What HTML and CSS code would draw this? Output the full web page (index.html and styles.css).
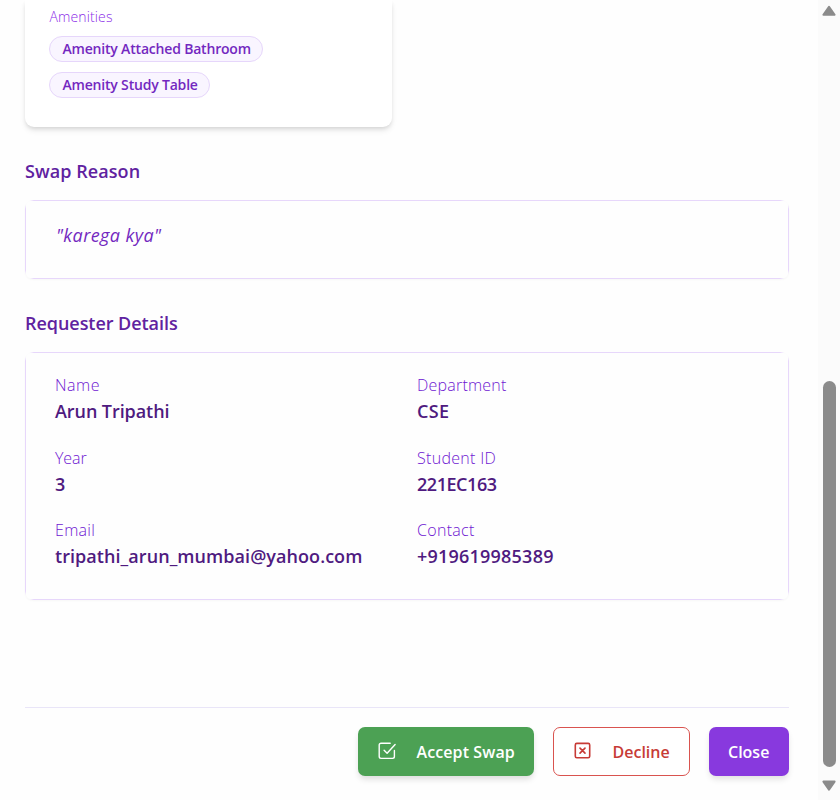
FILE: index.html
```html
<!DOCTYPE html>
<html lang="en">
<head>
<meta charset="utf-8">
<title>Swap Request</title>
<link rel="stylesheet" href="styles.css">
</head>
<body>
<div class="window">
  <main class="content">
    <section class="room-card">
      <p class="amenities-label"><span class="t-amen">Amenities</span></p>
      <div class="tags">
        <span class="tag tag-bath"><span class="t-bath">Amenity Attached Bathroom</span></span>
        <span class="tag tag-table"><span class="t-table">Amenity Study Table</span></span>
      </div>
    </section>
    <h2 class="heading"><span class="t-reason">Swap Reason</span></h2>
    <section class="panel reason"><p class="quote"><span class="t-quote">"karega kya"</span></p></section>
    <h2 class="heading"><span class="t-details">Requester Details</span></h2>
    <section class="panel details">
      <div class="field"><p class="label"><span class="t-name">Name</span></p><p class="value"><span class="t-arun">Arun Tripathi</span></p></div>
      <div class="field"><p class="label"><span class="t-dept">Department</span></p><p class="value"><span class="t-cse">CSE</span></p></div>
      <div class="field"><p class="label"><span class="t-year">Year</span></p><p class="value"><span class="t-three">3</span></p></div>
      <div class="field"><p class="label"><span class="t-sid">Student ID</span></p><p class="value"><span class="t-id">221EC163</span></p></div>
      <div class="field"><p class="label"><span class="t-email">Email</span></p><p class="value"><span class="t-mail">tripathi_arun_mumbai@yahoo.com</span></p></div>
      <div class="field"><p class="label"><span class="t-contact">Contact</span></p><p class="value"><span class="t-phone">+919619985389</span></p></div>
    </section>
    <footer class="actions">
      <button class="btn accept">
        <svg class="icon" width="20" height="20" viewBox="0 0 20 20" fill="none" stroke="currentColor" stroke-width="1.4" stroke-linecap="round" stroke-linejoin="round"><path d="M13.2 2.2H4a1.8 1.8 0 0 0-1.8 1.8v11.6A1.8 1.8 0 0 0 4 17.4h11.6a1.8 1.8 0 0 0 1.8-1.8V9.4M7.1 9.2l3 3 8-8.7"/></svg>
        <span class="t-accept">Accept Swap</span>
      </button>
      <button class="btn decline">
        <svg class="icon" width="20" height="20" viewBox="0 0 20 20" fill="none" stroke="currentColor" stroke-width="1.6" stroke-linecap="round"><rect x="3.3" y="2.4" width="14.4" height="14.4" rx="1.5"/><path d="m8 7.1 5 5m0-5-5 5"/></svg>
        <span class="t-decline">Decline</span>
      </button>
      <button class="btn close"><span class="t-close">Close</span></button>
    </footer>
  </main>
  <aside class="scrollbar">
    <svg width="16" height="12" viewBox="0 0 16 12"><path d="M8 1.8 13.6 9.8H2.4Z" fill="#8b8b8b" stroke="#8b8b8b" stroke-width="2" stroke-linejoin="round"/></svg>
    <div class="thumb"></div>
    <svg width="16" height="12" viewBox="0 0 16 12"><path d="M2.4 1.6H13.6L8 9.6Z" fill="#8b8b8b" stroke="#8b8b8b" stroke-width="2" stroke-linejoin="round"/></svg>
  </aside>
</div>
</body>
</html>
```
FILE: styles.css
```css
* { box-sizing: border-box; }
body, p, h2 { margin: 0; }
body { background: #fefefe; font-family: "Open Sans", "Noto Sans", sans-serif; overflow: hidden; }
.window { display: flex; height: 800px; }
.content { width: 818px; padding: 0 29px 0 25px; }
.room-card {
  width: 367px; height: 127px; padding: 6px 24px 0; background: #fff;
  border-radius: 0 0 9px 9px;
  box-shadow: 0 4px 6px -1px rgba(0,0,0,.1), 0 2px 4px -1px rgba(0,0,0,.1);
}
.amenities-label { height: 30px; line-height: 22px; font-size: 14px; font-weight: 300; color: #8a2be8; }
.tags { display: flex; flex-direction: column; align-items: flex-start; gap: 10px; }
.tag {
  height: 26px; padding-left: 12.5px; line-height: 23px; border: 1px solid #e6d6fb;
  border-radius: 13px; background: #f9f5ff; color: #7328c0; font-size: 14px; font-weight: 600;
  white-space: nowrap;
}
.tag-bath { width: 214px; }
.tag-table { width: 161px; }
.heading { margin-top: 30px; height: 43px; line-height: 28px; font-size: 18px; font-weight: 600; color: #6022a0; }
.panel {
  --line: #e7d7fb;
  background:
    linear-gradient(90deg, transparent 4px, var(--line) 9px calc(100% - 9px), transparent calc(100% - 4px)) top / 100% 1px no-repeat,
    linear-gradient(90deg, transparent 4px, var(--line) 9px calc(100% - 9px), transparent calc(100% - 4px)) bottom / 100% 1px no-repeat,
    linear-gradient(transparent 4px, var(--line) 9px calc(100% - 9px), transparent calc(100% - 4px)) left / 1px 100% no-repeat,
    linear-gradient(transparent 4px, var(--line) 9px calc(100% - 9px), transparent calc(100% - 4px)) right / 1px 100% no-repeat,
    #fefefe;
  border-radius: 8px;
  box-shadow: 0 1px 2px rgba(0,0,0,.03);
}
.reason { height: 79px; padding: 21px 31px; }
.quote { line-height: 28px; font-size: 18px; font-style: italic; color: #7328c0; }
.details {
  height: 248px; padding: 21px 30px 0; display: grid;
  grid-template-columns: 1fr 1fr; grid-auto-rows: 53px; column-gap: 20px; row-gap: 19.6px;
}
.label { height: 24px; line-height: 24px; font-size: 16px; font-weight: 300; color: #6f17d2; }
.value { line-height: 28px; font-size: 18px; font-weight: 600; color: #4f1a80; }
.actions { margin-top: 107px; padding-top: 19px; border-top: 1px solid #e9e5f8; display: flex; justify-content: flex-end; gap: 19px; }
.btn {
  height: 49px; border: 0; border-radius: 7px; padding: 0; display: flex; align-items: center;
  font-family: inherit; font-size: 16px; font-weight: 600; color: #fff; white-space: nowrap;
}
.icon { margin-top: -2px; flex: none; }
.accept { width: 176px; padding-left: 19px; gap: 19.5px; background: #4ca154; box-shadow: 0 4px 6px -1px rgba(0,0,0,.14); }
.decline { width: 137px; padding-left: 18px; gap: 20.5px; border: 1px solid #d9534f; background: #fff; color: #c73b36; }
.close { width: 80px; padding-left: 19px; background: #8839de; box-shadow: 0 4px 6px -1px rgba(0,0,0,.12); }
.scrollbar { width: 22px; background: #fbfbfb; padding: 5px 3px 8px; display: flex; flex-direction: column; align-items: center; }
.scrollbar svg { flex: none; }
.thumb { width: 13px; height: 386px; margin: 364px 0 auto; border-radius: 7px; background: #8b8b8b; }

.t-amen { margin-left: .5px; letter-spacing: .12px; }
.t-bath { letter-spacing: -.19px; }
.t-table { letter-spacing: -.19px; }
.t-reason { letter-spacing: .07px; }
.t-details { letter-spacing: -.05px; }
.t-quote { letter-spacing: .42px; }
.t-name { letter-spacing: .5px; }
.t-dept { letter-spacing: .22px; }
.t-sid { letter-spacing: .3px; }
.t-year { letter-spacing: -.1px; }
.t-email, .t-contact { letter-spacing: .3px; }
.t-cse { letter-spacing: .4px; }
.t-arun { letter-spacing: -.07px; }
.t-id { letter-spacing: -.45px; }
.t-mail { letter-spacing: .06px; }
.t-phone { letter-spacing: .22px; }
.t-accept { letter-spacing: .1px; }
```
